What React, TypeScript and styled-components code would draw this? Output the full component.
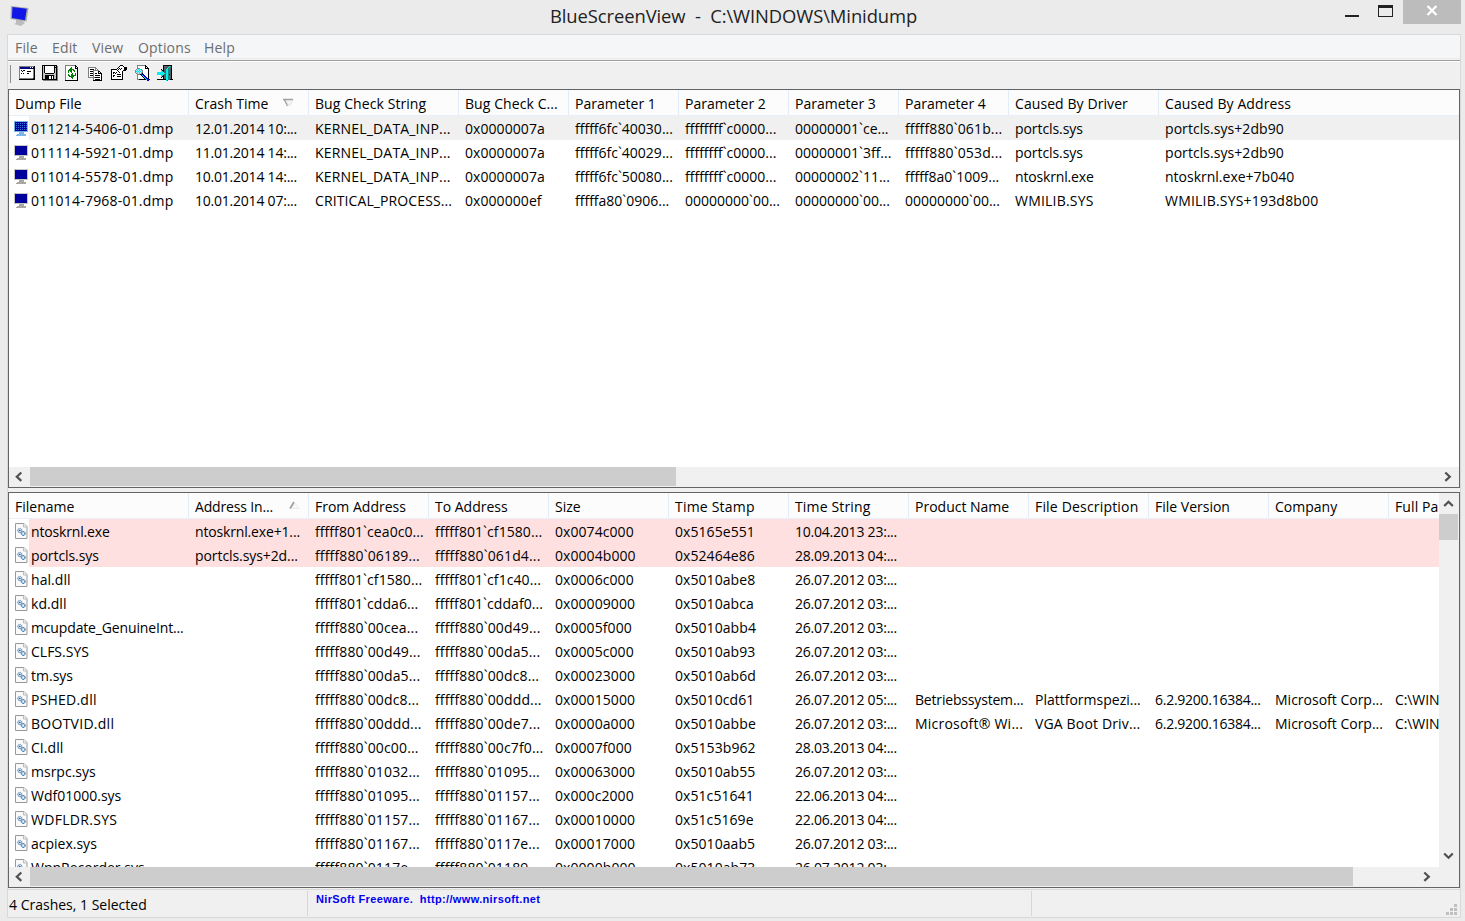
import React from 'react';
import styled, { createGlobalStyle } from 'styled-components';

const Global = createGlobalStyle`
  * { box-sizing: border-box; }
  html, body { margin: 0; background: #ebebeb; }
  body { font-family: "Open Sans", "Noto Sans", sans-serif; font-size: 14px; color: #000; overflow: hidden; }
`;

const Window = styled.div`
  width: 1465px; height: 921px; background: #ebebeb;
  display: flex; flex-direction: column; overflow: hidden;
`;
const TitleBar = styled.header`
  height: 34px; flex: none; display: grid;
  grid-template-columns: 550px 1fr 127px; align-items: start;
  svg { display: block; }
`;
const AppIcon = styled.div`padding: 5px 0 0 9px;`;
const Title = styled.h1`
  margin: 0; font-weight: 400; font-size: 18.4px; line-height: 32px; white-space: pre; color: #222; letter-spacing: -0.08px;
`;
const Controls = styled.div`display: flex;`;
const Close = styled.div`
  width: 58px; height: 24px; background: #bcbcbc; display: flex; justify-content: center; padding: 5px 1px 0 0;
`;
const Client = styled.main`
  width: 1454px; height: 884px; margin-left: 7px; border: 1px solid #d9d9d9; background: #f0f0f0;
  display: flex; flex-direction: column;
`;
const MenuBar = styled.nav`
  height: 24px; flex: none; background: #f5f6f7; display: flex; padding-left: 7px; color: #6d6d6d;
  line-height: 25px; border-bottom: 1px solid #ececec;
`;
const MenuItem = styled.span<{ $w: number }>`
  width: ${p => p.$w}px; letter-spacing: 0.15px;
`;
const ToolBar = styled.div`
  height: 29px; flex: none; margin-top: 1px; border-top: 1px solid #a0a0a0; box-shadow: inset 0 1px #fff;
  display: flex; padding: 4px 0 0 2px;
  svg { display: block; flex: none; }
`;
const Grip = styled.i`width: 1px; height: 18px; background: #8c8c8c; margin-right: 8px;`;

const Pane = styled.section<{ $h: number; $top?: number }>`
  height: ${p => p.$h}px; margin-top: ${p => p.$top ?? 0}px; width: 1452px; flex: none; background: #fff;
  border: 1px solid #646464; display: flex; flex-direction: column; overflow: hidden;
`;
const PaneBody = styled.div`flex: 1; min-height: 0; display: flex;`;
const List = styled.div`flex: 1; min-width: 0; overflow: hidden;`;
const HeadRow = styled.div`
  height: 26px; display: flex; background: #fcfcfc; border-bottom: 1px solid #e8eff8;
`;
const HeadCell = styled.div<{ $w: number; $open?: boolean }>`
  width: ${p => p.$w}px; flex: none; padding-left: 6px; line-height: 27px; white-space: nowrap;
  border-right: 1px solid ${p => (p.$open ? 'transparent' : '#e3edfa')}; display: flex; justify-content: space-between;
`;
const SortMark = styled.svg<{ $gap: number }>`flex: none; margin: 8px ${p => p.$gap}px 0 0;`;
const Row = styled.div<{ $bg?: string }>`
  height: 24px; display: flex; line-height: 26px;
  background: linear-gradient(90deg, #fff 20px, ${p => p.$bg ?? '#fff'} 20px);
`;
const Cell = styled.div<{ $w: number; $first?: boolean }>`
  width: ${p => p.$w}px; flex: none; padding-left: ${p => (p.$first ? 5 : 6)}px; white-space: pre; display: flex;
  svg { flex: none; margin: 4px 2px 0 0; }
`;
const Fit = styled.span<{ $ls: number }>`letter-spacing: ${p => p.$ls}px;`;
const HScroll = styled.div`
  height: 20px; flex: none; background: #f0f0f0; display: flex; justify-content: space-between; padding-bottom: 1px;
  svg { flex: none; display: block; }
`;
const HThumb = styled.div<{ $w: number }>`width: ${p => p.$w}px; background: #cdcdcd;`;
const Spacer = styled.div<{ $w?: number }>`${p => (p.$w ? `width: ${p.$w}px;` : 'flex: 1;')}`;
const VScroll = styled.div`
  width: 20px; background: #f0f0f0; display: flex; flex-direction: column; flex: none; padding-right: 1px;
  svg { display: block; flex: none; }
`;
const VThumb = styled.div`height: 26px; background: #cdcdcd;`;
const StatusBar = styled.footer`
  flex: 1; margin-top: 1px; border-top: 1px solid #d9d9d9; display: flex; padding-top: 1px;
  svg { margin: 13px 2px 0 auto; }
`;
const StatusPart = styled.div<{ $w: number }>`
  width: ${p => p.$w}px; height: 25px; border-right: 1px solid #d7d7d7; padding-left: 1px; line-height: 28px;
`;
const Link = styled.span`
  display: block; padding-left: 7px; font: bold 11px/17px "Liberation Sans", Arial, sans-serif; color: #0000f0; white-space: pre;
  letter-spacing: 0.35px;
`;

type Palette = Record<string, string>;
const pal: Palette = {
  k: '#000', w: '#fff', n: '#000080', g: '#808080', s: '#c0c0c0', G: '#008000',
  c: '#00f0f0', t: '#008b8b', b: '#0000d0', l: '#b4ecf4', d: '#555f5f',
};
const Pixels = ({ rows }: { rows: string[] }) => (
  <svg width={rows[0].length} height={rows.length} shapeRendering="crispEdges">
    {rows.flatMap((r, y) =>
      [...r].map((ch, x) => (pal[ch] ? <rect key={`${x}.${y}`} x={x} y={y} width="1" height="1" fill={pal[ch]} /> : null)),
    )}
  </svg>
);

const properties = [
  '................', 'gggggggggggggggk', 'gnnnnnnnnnnwnwnk', 'gnnnnnnnnnnnnnnk', 'gwwwwwwwwwwwwwgk', 'gwkwkkwwwwwwwwgk', 'gwwkwwwwkkkkwwgk',
  'gwwwwwwwwwwwwwgk', 'gwkwkwwwkkwwwwgk', 'gwwwwwwwwwwwwwgk', 'gwwwwwwwwwwwwwgk', 'gwwwwwwwwwwwwwgk',
  'gwwwwwwwwwwwwwgk', 'ggggggggggggggkk', 'kkkkkkkkkkkkkkkk', '................',
];
const save = [
  'kkkkkkkkkkkkkkk.', 'kskwwwwwwwwwkskg', 'kskwwwwwwwwwkkkg', 'kskwwwwwwwwwkskg', 'kskwwwwwwwwwkskg', 'kskwwwwwwwwwkskg',
  'kskwwwwwwwwwkskg', 'kskwwwwwwwwwkskg', 'ksskkkkkkkkksskg', 'kssssssssssssskg', 'ksskkkkkkkkksskg', 'ksskkkkwwkwksskg',
  'ksskkkkwwkwksskg', 'ksskkkkwwkwksskg', 'kkkkkkkkkkkkkkkg', '.ggggggggggggggg',
];
const refresh = [
  'ggggggggggk..', 'gwwwwwwwwwkk.', 'gwwwwwGwwwkwk', 'gwwwwGGwwwkkk', 'gwwwGGGGGwwwk', 'gwwGGGGwGGwwk', 'gwwGwGGwwGwwk', 'gwwGwwGwwwwwk',
  'gwwwwwwGwwGwk', 'gwwGwwGGwwGwk', 'gwwGGwGGGGGwk', 'gwwwGGGGGwwwk', 'gwwwwwGGwwwwk', 'gwwwwwwGwwwwk', 'gwwwwwwwwwwwk', 'kkkkkkkkkkkkk',
];
const copy = [
  '................', '................', 'gggggggg........', 'gwwwwwwgg.......', 'gwkkkkwgwg......', 'gwwwwgggggg.....', 'gwkkkgwwwwkk....',
  'gwwwwgwwwwkwk...', 'gwkkkgwkkwkkkk..', 'gwwwwgwwwwwwwk..', 'gwkkkgwkkkkkwk..', 'gwwwwgwwwwwwwk..', 'gggggggkkkkkwk..'.slice(0, 16),
  '.....gwwwwwwwk..', '.....gwkkkkkwk..', '.....kkkkkkkkk..',
];
const options = [
  '.........kkk....', '........kwwwk...', '.......kwwwwwkkk', '......kwkwkwwkkk', 'kkkkkkwkwkwwwkkk', 'kwwwwwkwwwwwkkk.', 'kwwwwwwkwwwk....',
  'kwkkwkwwkwwk....', 'kwkwkwwwwwwk....', 'kwwwwwkkkkwk....', 'kwkkwwwwwwwk....', 'kwkwwwkkkkwk....', 'kwwwwwwwwwwk....', 'kwwwwwwwwwwk....', 'kkkkkkkkkkkk....', '................',
];
const find = [
  '..ggggggggk....', '..gwwwwwwwkk...', '..gwwwwwwwkwk..', '..gggwwwwwkkkk.', '.glclcgwwwwwwk.', 'glclclcgwwwwwk.', 'gclclclgwwwwwk.', 'glclclcgwwwwwk.',
  '.gclclgkwwwwwk.', '..gggkbbkwwwwk.', '..gwwwkcbbwwwk.', '..gwwwwkcbbwwk.', '..gwwwwwkcbbwk.', '..gwwwwwwkcbbk.', '..ggkkkkkkkcbbk', '............bb.',
];
const exit = [
  '......kkkkkkkkk.', '......kdddddctk.', '......kddddcttk.', '......kdddcttdk.', '....k.kddccttdk.', '....ckkddccttdk.', '....cckddccttdk.', 'cccccccddccttdk.',
  'ccccccccdccttdk.', 'cccccccddcctkdk.', '....cckddccttdk.', '....ckkddccttdk.', '....k.kddccttdk.', '......kddccttdk.', 'kkkkkkkkkccttkkk', '.........ct.....',
];

const Monitor = ({ selected }: { selected?: boolean }) => (
  <svg width="15" height="17" viewBox="0 0 15 17" shapeRendering="crispEdges">
    <path d="M0 1h14v11H0z" fill={selected ? '#7eb5e9' : '#c8c5bf'} />
    <path d="M1 2h12v9H1z" fill="#00009c" />
    {selected && <path d="M2 3h11M2 5h11M2 7h11M2 9h11" stroke="#3374dd" strokeDasharray="1 1" />}
    <path d="M5 12h5v2H5zM3 14h9v1H3zM2 15h10v1H2z" fill={selected ? '#7eb5e9' : '#aaa7a2'} />
  </svg>
);
const FileIcon = () => (
  <svg width="15" height="17" viewBox="0 0 15 17">
    <path d="M1.5.5h8.500l3 3v12h-11.500z" fill="#fafafa" stroke="#999" />
    <path d="M9.500.5v3.500h3.500" fill="#eee" stroke="#bbb" />
    <circle cx="5.800" cy="7.500" r="2.100" fill="#cfe3f2" stroke="#3c6f9f" strokeDasharray="1.200 .5" />
    <circle cx="9.200" cy="10.500" r="2" fill="#a9cde6" stroke="#285f94" strokeDasharray="1.200 .5" />
    <circle cx="5.800" cy="7.500" r=".8" fill="#27598c" />
    <circle cx="9.200" cy="10.500" r=".7" fill="#fff" />
  </svg>
);
const arrows = {
  l: { w: 21, h: 19, d: 'M12.300 5.500 7.800 9.700l4.500 4.200' },
  r: { w: 21, h: 19, d: 'M7.300 5.500 11.800 9.700l-4.500 4.200' },
  u: { w: 19, h: 21, d: 'M5.200 13 9.500 8.700l4.300 4.300' },
  d: { w: 19, h: 21, d: 'M5.200 7.500 9.500 11.800l4.300-4.300' },
};
const Arrow = ({ dir }: { dir: keyof typeof arrows }) => (
  <svg width={arrows[dir].w} height={arrows[dir].h}>
    <path d={arrows[dir].d} fill="none" stroke="#505050" strokeWidth="2.200" />
  </svg>
);

const topCols: [string, number][] = [
  ['Dump File', 180], ['Crash Time', 120], ['Bug Check String', 150], ['Bug Check C...', 110], ['Parameter 1', 110], ['Parameter 2', 110],
  ['Parameter 3', 110], ['Parameter 4', 110], ['Caused By Driver', 150], ['Caused By Address', 290],
];
const topRows = [
  ['011214-5406-01.dmp', '12.01.2014 10:...', 'KERNEL_DATA_INP...', '0x0000007a', 'fffff6fc`40030...', 'ffffffff`c0000...', '00000001`ce...', 'fffff880`061b...', 'portcls.sys', 'portcls.sys+2db90'],
  ['011114-5921-01.dmp', '11.01.2014 14:...', 'KERNEL_DATA_INP...', '0x0000007a', 'fffff6fc`40029...', 'ffffffff`c0000...', '00000001`3ff...', 'fffff880`053d...', 'portcls.sys', 'portcls.sys+2db90'],
  ['011014-5578-01.dmp', '10.01.2014 14:...', 'KERNEL_DATA_INP...', '0x0000007a', 'fffff6fc`50080...', 'ffffffff`c0000...', '00000002`11...', 'fffff8a0`1009...', 'ntoskrnl.exe', 'ntoskrnl.exe+7b040'],
  ['011014-7968-01.dmp', '10.01.2014 07:...', 'CRITICAL_PROCESS...', '0x000000ef', 'fffffa80`0906...', '00000000`00...', '00000000`00...', '00000000`00...', 'WMILIB.SYS', 'WMILIB.SYS+193d8b00'],
];
const botCols: [string, number][] = [
  ['Filename', 180], ['Address In...', 120], ['From Address', 120], ['To Address', 120], ['Size', 120], ['Time Stamp', 120], ['Time String', 120],
  ['Product Name', 120], ['File Description', 120], ['File Version', 120], ['Company', 120], ['Full Pa', 120],
];
const botRows = [
  ['ntoskrnl.exe', 'ntoskrnl.exe+1...', 'fffff801`cea0c0...', 'fffff801`cf1580...', '0x0074c000', '0x5165e551', '10.04.2013 23:...'],
  ['portcls.sys', 'portcls.sys+2d...', 'fffff880`06189...', 'fffff880`061d4...', '0x0004b000', '0x52464e86', '28.09.2013 04:...'],
  ['hal.dll', '', 'fffff801`cf1580...', 'fffff801`cf1c40...', '0x0006c000', '0x5010abe8', '26.07.2012 03:...'],
  ['kd.dll', '', 'fffff801`cdda6...', 'fffff801`cddaf0...', '0x00009000', '0x5010abca', '26.07.2012 03:...'],
  ['mcupdate_GenuineInt...', '', 'fffff880`00cea...', 'fffff880`00d49...', '0x0005f000', '0x5010abb4', '26.07.2012 03:...'],
  ['CLFS.SYS', '', 'fffff880`00d49...', 'fffff880`00da5...', '0x0005c000', '0x5010ab93', '26.07.2012 03:...'],
  ['tm.sys', '', 'fffff880`00da5...', 'fffff880`00dc8...', '0x00023000', '0x5010ab6d', '26.07.2012 03:...'],
  ['PSHED.dll', '', 'fffff880`00dc8...', 'fffff880`00ddd...', '0x00015000', '0x5010cd61', '26.07.2012 05:...', 'Betriebssystem...', 'Plattformspezi...', '6.2.9200.16384...', 'Microsoft Corp...', 'C:\\WIN'],
  ['BOOTVID.dll', '', 'fffff880`00ddd...', 'fffff880`00de7...', '0x0000a000', '0x5010abbe', '26.07.2012 03:...', 'Microsoft® Wi...', 'VGA Boot Driv...', '6.2.9200.16384...', 'Microsoft Corp...', 'C:\\WIN'],
  ['CI.dll', '', 'fffff880`00c00...', 'fffff880`00c7f0...', '0x0007f000', '0x5153b962', '28.03.2013 04:...'],
  ['msrpc.sys', '', 'fffff880`01032...', 'fffff880`01095...', '0x00063000', '0x5010ab55', '26.07.2012 03:...'],
  ['Wdf01000.sys', '', 'fffff880`01095...', 'fffff880`01157...', '0x000c2000', '0x51c51641', '22.06.2013 04:...'],
  ['WDFLDR.SYS', '', 'fffff880`01157...', 'fffff880`01167...', '0x00010000', '0x51c5169e', '22.06.2013 04:...'],
  ['acpiex.sys', '', 'fffff880`01167...', 'fffff880`0117e...', '0x00017000', '0x5010aab5', '26.07.2012 03:...'],
  ['WppRecorder.sys', '', 'fffff880`0117e...', 'fffff880`01189...', '0x0000b000', '0x5010ab73', '26.07.2012 03:...'],
];

// Tracking per kind of value, first match wins.
const tracking: [RegExp, number][] = [
  [/\.dmp$/, 0.2], [/^\d\d\.\d\d\.\d{4}/, -0.22], [/^KERNEL/, 0.18], [/^CRITICAL/, 0.11], [/^WMILIB/, 0.2],
  [/^ntoskrnl\.exe\+7/, 0], [/^ntoskrnl/, -0.16], [/^portcls\.sys\+2db/, 0.06], [/^portcls/, -0.08], [/^6\.2/, -0.26],
  [/^Microsoft®/, 0.22], [/^VGA/, 0.15], [/^Betr/, -0.18], [/^File D/, 0.18], [/^mcup/, -0.15], [/^WDF/, 0.3], [/^BOOT/, 0.27],
  [/^PSHED/, 0.22], [/^(CI|hal|kd)\.dll/, 0.05], [/^Address In/, -0.15], [/^Time Str/, 0.15], [/^Time St/, 0.2], [/^Full/, 0.1],
  [/^fffff880/, 0.14], [/^fffff801/, 0.07], [/^0x/, 0.07], [/^(Dump|Bug|Caused)/, 0.08], [/^C:/, -0.1],
];
const spacing = (t: string) => tracking.find(([re]) => re.test(t))?.[1] ?? 0;
const Label = ({ t }: { t: string }) => <Fit $ls={spacing(t)}>{t}</Fit>;

const SortDown = () => (
  <SortMark $gap={14} width="11" height="9"><path d="M1 1.500h9L6.500 8z" fill="#f4f4f4" stroke="#e2e2e2" /><path d="M0 1.500h10M1.500 2l3 6" stroke="#a0a0a0" strokeWidth="1.300" fill="none" /></SortMark>
);
const SortUp = () => (
  <SortMark $gap={8} width="11" height="9"><path d="M2 7.500 6 2l4 5.500z" fill="#f8f8f8" stroke="#ececec" /><path d="M1 7.500 5 1" stroke="#999" strokeWidth="1.500" /></SortMark>
);

export default function App() {
  return (
    <Window>
      <Global />
      <TitleBar>
        <AppIcon>
          <svg width="22" height="22" viewBox="0 0 22 22">
            <path d="M7 15h6l3 3-4 3-7-2 2-1z" fill="#bcbcbc" />
            <path d="M2 1 19.500 3 17.500 16.500 1.500 14z" fill="#a9a9a4" />
            <path d="M3.500 2 17.800 3.800 16 15.300 2.800 13z" fill="#1018e8" />
          </svg>
        </AppIcon>
        <Title>BlueScreenView  -  C:\WINDOWS\Minidump</Title>
        <Controls>
          <svg width="65" height="24" shapeRendering="crispEdges">
            <path d="M7 15h14v2H7zM40 5h15v12H40zM41 8v8h13V8z" fill="#222" fillRule="evenodd" />
          </svg>
          <Close>
            <svg width="12" height="11"><path d="M1.500 1 10.500 10M10.500 1 1.500 10" stroke="#fff" strokeWidth="2.300" /></svg>
          </Close>
        </Controls>
      </TitleBar>
      <Client>
        <MenuBar>
          <MenuItem $w={37}>File</MenuItem><MenuItem $w={40}>Edit</MenuItem><MenuItem $w={46}>View</MenuItem>
          <MenuItem $w={66}>Options</MenuItem><MenuItem $w={50}>Help</MenuItem>
        </MenuBar>
        <ToolBar>
          <Grip />
          <Pixels rows={properties} /><Spacer $w={7} />
          <Pixels rows={save} /><Spacer $w={7} />
          <Pixels rows={refresh} /><Spacer $w={10} />
          <Pixels rows={copy} /><Spacer $w={7} />
          <Pixels rows={options} /><Spacer $w={8} />
          <Pixels rows={find} /><Spacer $w={7} />
          <Pixels rows={exit} />
        </ToolBar>
        <Pane $h={399}>
          <PaneBody>
            <List>
              <HeadRow>
                {topCols.map(([t, w], i) => <HeadCell key={t} $w={w} $open={i === 9}><Label t={t} />{i === 1 && <SortDown />}</HeadCell>)}
              </HeadRow>
              {topRows.map((r, n) => (
                <Row key={r[0]} $bg={n === 0 ? '#f0f0f0' : undefined}>
                  {r.map((t, i) => <Cell key={i} $w={topCols[i][1]} $first={i === 0}>{i === 0 && <Monitor selected={n === 0} />}<Label t={t} /></Cell>)}
                </Row>
              ))}
            </List>
          </PaneBody>
          <HScroll><Arrow dir="l" /><HThumb $w={646} /><Spacer /><Arrow dir="r" /></HScroll>
        </Pane>
        <Pane $h={396} $top={4}>
          <PaneBody>
            <List>
              <HeadRow>
                {botCols.map(([t, w], i) => <HeadCell key={t} $w={w}><Label t={t} />{i === 1 && <SortUp />}</HeadCell>)}
              </HeadRow>
              {botRows.map((r, n) => (
                <Row key={r[0]} $bg={n < 2 ? '#ffe0e0' : undefined}>
                  {r.map((t, i) => <Cell key={i} $w={botCols[i][1]} $first={i === 0}>{i === 0 && <FileIcon />}<Label t={t} /></Cell>)}
                </Row>
              ))}
            </List>
            <VScroll><Arrow dir="u" /><VThumb /><Spacer /><Arrow dir="d" /></VScroll>
          </PaneBody>
          <HScroll><Arrow dir="l" /><HThumb $w={1323} /><Spacer /><Arrow dir="r" /><Spacer $w={21} /></HScroll>
        </Pane>
        <StatusBar>
          <StatusPart $w={300}>4 Crashes, 1 Selected</StatusPart>
          <StatusPart $w={724}><Link>NirSoft Freeware.  http://www.nirsoft.net</Link></StatusPart>
          <svg width="12" height="12" shapeRendering="crispEdges">
            <path d="M8 0h3v3H8zM4 4h3v3H4zM8 4h3v3H8zM0 8h3v3H0zM4 8h3v3H4zM8 8h3v3H8z" fill="#bfbfbf" />
          </svg>
        </StatusBar>
      </Client>
    </Window>
  );
}
